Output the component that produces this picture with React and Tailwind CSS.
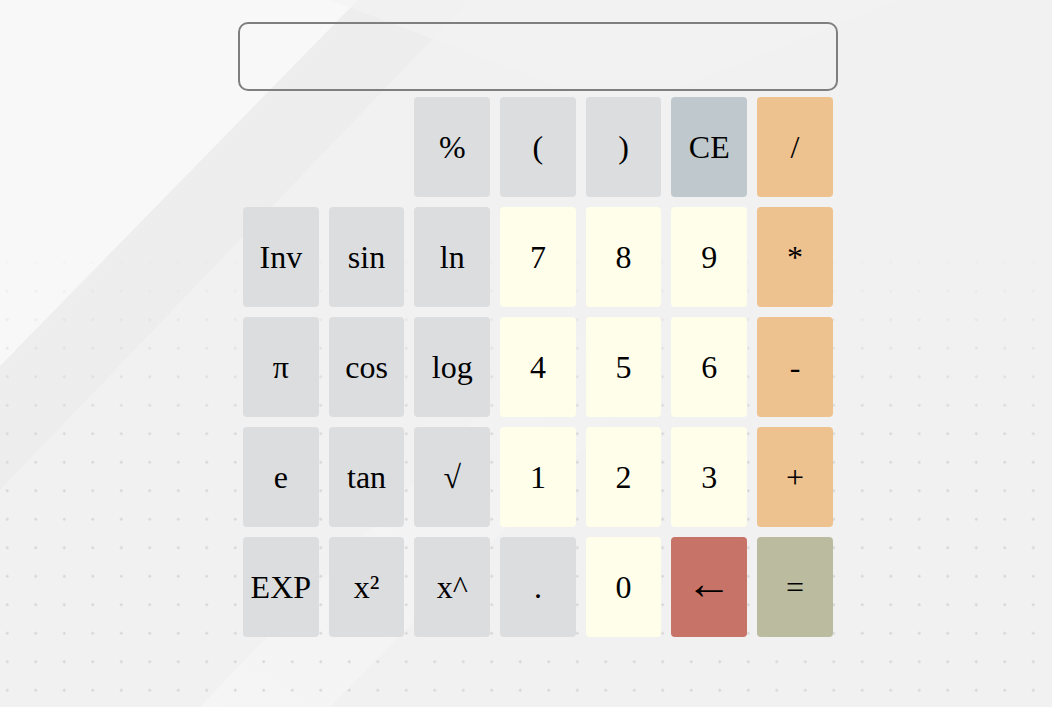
import React from "react";

const GRAY = "bg-[#dcdddf]";
const CREAM = "bg-[#fffeeb]";
const ORANGE = "bg-[#eec28f]";

const keys = [
  [null, null, { t: "%", c: GRAY }, { t: "(", c: GRAY }, { t: ")", c: GRAY }, { t: "CE", c: "bg-[#bfc9cd]" }, { t: "/", c: ORANGE }],
  [{ t: "Inv", c: GRAY }, { t: "sin", c: GRAY }, { t: "ln", c: GRAY }, { t: "7", c: CREAM }, { t: "8", c: CREAM }, { t: "9", c: CREAM }, { t: "*", c: ORANGE }],
  [{ t: "π", c: GRAY }, { t: "cos", c: GRAY }, { t: "log", c: GRAY }, { t: "4", c: CREAM }, { t: "5", c: CREAM }, { t: "6", c: CREAM }, { t: "-", c: ORANGE }],
  [{ t: "e", c: GRAY }, { t: "tan", c: GRAY }, { t: "√", c: GRAY }, { t: "1", c: CREAM }, { t: "2", c: CREAM }, { t: "3", c: CREAM }, { t: "+", c: ORANGE }],
  [{ t: "EXP", c: GRAY }, { t: "x²", c: GRAY }, { t: "x^", c: GRAY }, { t: ".", c: GRAY }, { t: "0", c: CREAM }, { t: "←", c: "bg-[#c87367]", big: true }, { t: "=", c: "bg-[#babb9f]" }],
];

function Backdrop() {
  return (
    <div className="absolute inset-0 pointer-events-none">
      <svg className="absolute inset-0" width="1052" height="707" viewBox="0 0 1052 707">
        <defs>
          <linearGradient id="band" x1="0" y1="0" x2="1" y2="1">
            <stop offset="0" stopColor="#efefef" />
            <stop offset="1" stopColor="#e8e8e8" />
          </linearGradient>
          <linearGradient id="low" x1="0" y1="1" x2="1" y2="0">
            <stop offset="0" stopColor="#f6f6f6" />
            <stop offset="1" stopColor="#f1f1f1" />
          </linearGradient>
        </defs>
        <rect width="1052" height="707" fill="#f1f1f1" />
        <polygon points="0,0 358,0 0,366" fill="#f8f8f8" />
        <polygon points="0,366 358,0 470,0 0,490" fill="url(#band)" opacity="0.7" />
        <polygon points="200,707 560,330 700,330 330,707" fill="url(#low)" opacity="0.8" />
        <polygon points="330,0 900,0 620,110" fill="#f4f4f4" opacity="0.6" />
      </svg>
      <div className="absolute inset-0 bg-[radial-gradient(circle,#d6d6d6_1.1px,transparent_1.5px)] bg-[size:28.5px_28.5px] bg-[position:-7px_-8px] [mask-image:linear-gradient(to_bottom,transparent_240px,black_440px)]" />
    </div>
  );
}

export default function App() {
  return (
    <div className="relative w-full h-[707px] overflow-hidden bg-[#f1f1f1] font-['Liberation_Serif','Times_New_Roman',serif]">
      <Backdrop />
      <div className="relative w-[600px] mx-auto pt-[22px] translate-x-[12px]">
        {/* display */}
        <div className="h-[69px] w-[600px] border-2 border-[#7f7f7f] rounded-[10px] bg-transparent" />
        <div className="grid grid-cols-[repeat(7,75.7px)] auto-rows-[100px] gap-[10px] ml-[5px] mt-[6px]">
          {keys.flat().map((k, i) =>
            k ? (
              <div
                key={i}
                className={`${k.c} rounded-[4px] flex items-center justify-center text-black leading-none ${k.big ? "text-[46px] pb-[6px]" : "text-[32px]"}`}
              >
                {k.t}
              </div>
            ) : (
              <div key={i} />
            )
          )}
        </div>
      </div>
    </div>
  );
}
